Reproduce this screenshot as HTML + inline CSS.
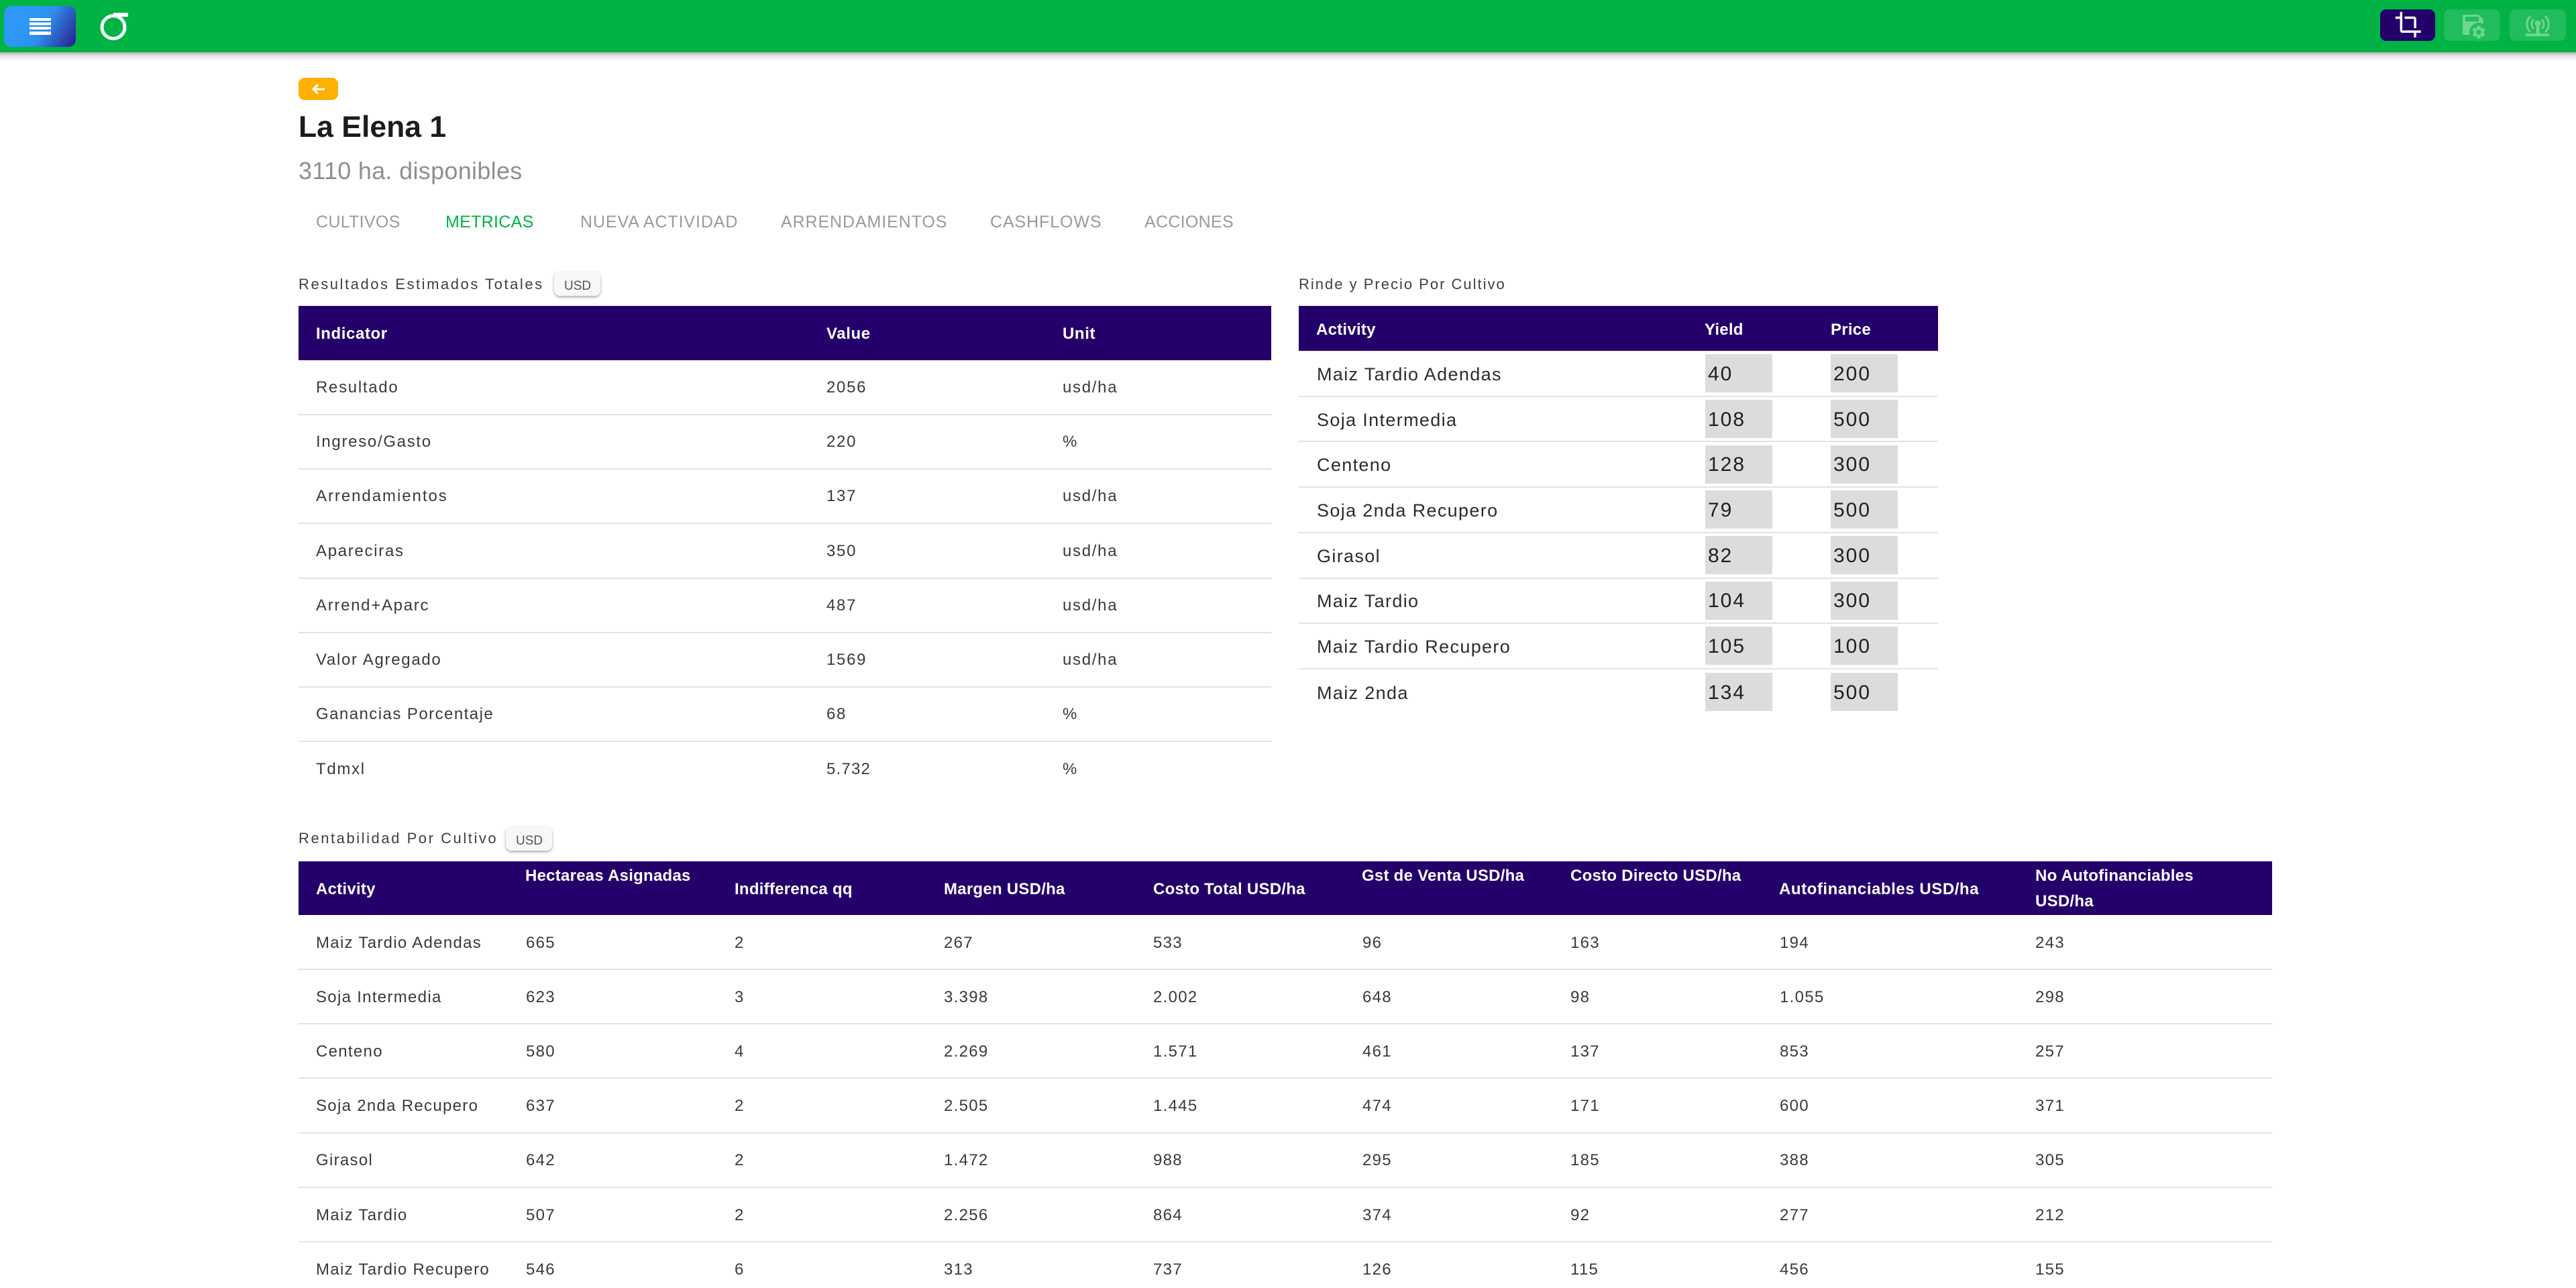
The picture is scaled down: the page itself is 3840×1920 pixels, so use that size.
<!DOCTYPE html>
<html lang="es"><head><meta charset="utf-8"><title>La Elena 1</title>
<style>
html,body{margin:0;padding:0;background:#fff;width:3840px;height:1920px;overflow:hidden}
svg{display:block;position:absolute;left:0;top:0}
text{font-family:"Liberation Sans",sans-serif;white-space:pre}
.h{font-weight:700;font-size:24px;fill:#fff;letter-spacing:.25px}
.b{font-size:24px;fill:#3a3a3a;letter-spacing:1.3px}
.b1{font-size:24px;fill:#3a3a3a;letter-spacing:1.7px}
.n{font-size:27px;fill:#2c2c2c;letter-spacing:1.35px}
.i{font-size:30px;fill:#1f1f1f;letter-spacing:2px}
.t{font-size:22px;fill:#3f3f3f;letter-spacing:2.55px}
.u{font-size:19px;fill:#555}
.tab{font-size:25px;fill:#9a9a9a;letter-spacing:.3px}
.l{fill:#e3e3e3}
</style></head><body>
<svg width="3840" height="1920" viewBox="0 0 3840 1920" xmlns="http://www.w3.org/2000/svg">
<defs>
<linearGradient id="gb" gradientUnits="userSpaceOnUse" x1="40" y1="30" x2="118" y2="76"><stop offset="0" stop-color="#2e98f6"/><stop offset=".3" stop-color="#2e8fec"/><stop offset="1" stop-color="#2a0a80"/></linearGradient>
<linearGradient id="sh" x1="0" y1="0" x2="0" y2="1"><stop offset="0" stop-color="#000" stop-opacity=".28"/><stop offset=".4" stop-color="#000" stop-opacity=".1"/><stop offset="1" stop-color="#000" stop-opacity="0"/></linearGradient>
<filter id="cs" x="-20%" y="-20%" width="140%" height="150%"><feDropShadow dx="0" dy="2" stdDeviation="2" flood-color="#000" flood-opacity=".35"/></filter>
</defs>

<!-- top bar -->
<rect x="0" y="78" width="3840" height="14" fill="url(#sh)"/>
<rect x="0" y="0" width="3840" height="78" fill="#00b344"/>
<rect x="6" y="9" width="107" height="61" rx="11" fill="url(#gb)"/>
<g fill="#fff"><rect x="44" y="27" width="32" height="4"/><rect x="44" y="33.5" width="32" height="4"/><rect x="44" y="40" width="32" height="4"/><rect x="44" y="47" width="32" height="5"/></g>
<circle cx="169" cy="40.5" r="17" fill="none" stroke="#fff" stroke-width="5"/>
<rect x="169" y="19" width="22" height="6" fill="#fff"/>

<rect x="3548" y="14" width="82" height="47" rx="9" fill="#24006b"/>
<path transform="translate(3569 16) scale(1.73)" fill="#fff" d="M17 15h2V7c0-1.1-.9-2-2-2H9v2h8v8zM7 17V1H5v4H1v2h4v10c0 1.1.9 2 2 2h10v4h2v-4h4v-2H7z"/>
<rect x="3643" y="14" width="84" height="47" rx="9" fill="#fff" fill-opacity=".13"/>
<rect x="3741" y="14" width="84" height="47" rx="9" fill="#fff" fill-opacity=".13"/>
<g>
<path d="M3673 22h22l7 7v23h-29a2 2 0 0 1-2-2V24a2 2 0 0 1 2-2z" fill="#6fd68f"/>
<rect x="3675" y="25" width="20" height="7" fill="#22bd5c"/>
<circle cx="3695" cy="48" r="14" fill="#22bd5c"/>
<path transform="translate(3683 36)" fill="#6fd68f" d="M19.14 12.94c.04-.3.06-.61.06-.94 0-.32-.02-.64-.07-.94l2.03-1.58c.18-.14.23-.41.12-.61l-1.92-3.32c-.12-.22-.37-.29-.59-.22l-2.39.96c-.5-.38-1.03-.7-1.62-.94l-.36-2.54c-.04-.24-.24-.41-.48-.41h-3.84c-.24 0-.43.17-.47.41l-.36 2.54c-.59.24-1.13.57-1.62.94l-2.39-.96c-.22-.08-.47 0-.59.22L2.74 8.87c-.12.21-.08.47.12.61l2.03 1.58c-.05.3-.09.63-.09.94s.02.64.07.94l-2.03 1.58c-.18.14-.23.41-.12.61l1.92 3.32c.12.22.37.29.59.22l2.39-.96c.5.38 1.03.7 1.62.94l.36 2.54c.05.24.24.41.48.41h3.84c.24 0 .44-.17.47-.41l.36-2.54c.59-.24 1.13-.56 1.62-.94l2.39.96c.22.08.47 0 .59-.22l1.92-3.32c.12-.22.07-.47-.12-.61l-2.01-1.58zM12 15.6c-1.98 0-3.6-1.62-3.6-3.6s1.62-3.6 3.6-3.6 3.6 1.62 3.6 3.6-1.62 3.6-3.6 3.6z"/>
</g>
<g fill="none" stroke="#6fd68f" stroke-width="3">
<path d="M3772 24c-7 7-7 17 0 24M3794 24c7 7 7 17 0 24M3777 29c-4 4-4 10 0 14M3789 29c4 4 4 10 0 14"/>
<path d="M3765 52h35" stroke-width="4"/><path d="M3783 38v14" stroke-width="5"/>
</g>
<circle cx="3783" cy="35" r="4.5" fill="#6fd68f"/>

<!-- header -->
<rect x="445" y="116" width="59" height="33" rx="9" fill="#ffb000"/>
<path d="M484 133h-17M474 126l-7 7 7 7" fill="none" stroke="#fff" stroke-width="3"/>
<text x="445" y="204" font-size="44.5" font-weight="700" fill="#1c1c1c">La Elena 1</text>
<text x="445" y="267" font-size="36" fill="#8f8f8f" style="letter-spacing:.3px">3110 ha. disponibles</text>
<text y="339" class="tab"><tspan x="471">CULTIVOS</tspan><tspan x="664" style="fill:#00b344">METRICAS</tspan></text>
<text y="339" class="tab" style="letter-spacing:.9px"><tspan x="865">NUEVA ACTIVIDAD</tspan><tspan x="1164">ARRENDAMIENTOS</tspan><tspan x="1476">CASHFLOWS</tspan></text>
<text y="339" class="tab"><tspan x="1706">ACCIONES</tspan></text>

<!-- table 1 -->
<text x="445" y="431" class="t">Resultados Estimados Totales</text>
<rect x="826" y="405" width="69" height="36" rx="9" fill="#f8f8f8" filter="url(#cs)"/>
<text x="841" y="432" class="u">USD</text>
<rect x="445" y="456" width="1450" height="81" fill="#24006b"/>
<text y="505" class="h" style="letter-spacing:.6px"><tspan x="471">Indicator</tspan><tspan x="1232">Value</tspan><tspan x="1584">Unit</tspan></text>
<g class="l"><rect x="445" y="617" width="1450" height="2"/><rect x="445" y="698" width="1450" height="2"/><rect x="445" y="779" width="1450" height="2"/><rect x="445" y="861" width="1450" height="2"/><rect x="445" y="942" width="1450" height="2"/><rect x="445" y="1023" width="1450" height="2"/><rect x="445" y="1104" width="1450" height="2"/></g>
<text y="585" class="b1"><tspan x="471">Resultado</tspan><tspan x="1232">2056</tspan><tspan x="1584">usd/ha</tspan></text>
<text y="666" class="b1"><tspan x="471">Ingreso/Gasto</tspan><tspan x="1232">220</tspan><tspan x="1584">%</tspan></text>
<text y="747" class="b1"><tspan x="471" style="letter-spacing:1.95px">Arrendamientos</tspan><tspan x="1232">137</tspan><tspan x="1584">usd/ha</tspan></text>
<text y="829" class="b1"><tspan x="471">Apareciras</tspan><tspan x="1232">350</tspan><tspan x="1584">usd/ha</tspan></text>
<text y="910" class="b1"><tspan x="471">Arrend+Aparc</tspan><tspan x="1232">487</tspan><tspan x="1584">usd/ha</tspan></text>
<text y="991" class="b1"><tspan x="471">Valor Agregado</tspan><tspan x="1232">1569</tspan><tspan x="1584">usd/ha</tspan></text>
<text y="1072" class="b1"><tspan x="471" style="letter-spacing:1.45px">Ganancias Porcentaje</tspan><tspan x="1232">68</tspan><tspan x="1584">%</tspan></text>
<text y="1154" class="b1"><tspan x="471">Tdmxl</tspan><tspan x="1232" style="letter-spacing:1.2px">5.732</tspan><tspan x="1584">%</tspan></text>

<!-- table 2 -->
<text x="1936" y="431" class="t" style="letter-spacing:2px">Rinde y Precio Por Cultivo</text>
<rect x="1936" y="456" width="953" height="67" fill="#24006b"/>
<text y="499" class="h"><tspan x="1962">Activity</tspan><tspan x="2541">Yield</tspan><tspan x="2729">Price</tspan></text>
<g class="l"><rect x="1936" y="590" width="953" height="2"/><rect x="1936" y="657" width="953" height="2"/><rect x="1936" y="725" width="953" height="2"/><rect x="1936" y="793" width="953" height="2"/><rect x="1936" y="861" width="953" height="2"/><rect x="1936" y="928" width="953" height="2"/><rect x="1936" y="996" width="953" height="2"/></g>
<g fill="#dcdcdc">
<rect x="2542" y="528" width="100" height="57"/><rect x="2729" y="528" width="100" height="57"/>
<rect x="2542" y="596" width="100" height="57"/><rect x="2729" y="596" width="100" height="57"/>
<rect x="2542" y="664" width="100" height="57"/><rect x="2729" y="664" width="100" height="57"/>
<rect x="2542" y="731" width="100" height="57"/><rect x="2729" y="731" width="100" height="57"/>
<rect x="2542" y="799" width="100" height="57"/><rect x="2729" y="799" width="100" height="57"/>
<rect x="2542" y="867" width="100" height="57"/><rect x="2729" y="867" width="100" height="57"/>
<rect x="2542" y="934" width="100" height="57"/><rect x="2729" y="934" width="100" height="57"/>
<rect x="2542" y="1003" width="100" height="57"/><rect x="2729" y="1003" width="100" height="57"/>
</g>
<text x="1963" y="567" class="n">Maiz Tardio Adendas</text><text y="567" class="i"><tspan x="2546">40</tspan><tspan x="2733">200</tspan></text>
<text x="1963" y="635" class="n">Soja Intermedia</text><text y="635" class="i"><tspan x="2546">108</tspan><tspan x="2733">500</tspan></text>
<text x="1963" y="702" class="n">Centeno</text><text y="702" class="i"><tspan x="2546">128</tspan><tspan x="2733">300</tspan></text>
<text x="1963" y="770" class="n">Soja 2nda Recupero</text><text y="770" class="i"><tspan x="2546">79</tspan><tspan x="2733">500</tspan></text>
<text x="1963" y="838" class="n">Girasol</text><text y="838" class="i"><tspan x="2546">82</tspan><tspan x="2733">300</tspan></text>
<text x="1963" y="905" class="n">Maiz Tardio</text><text y="905" class="i"><tspan x="2546">104</tspan><tspan x="2733">300</tspan></text>
<text x="1963" y="973" class="n">Maiz Tardio Recupero</text><text y="973" class="i"><tspan x="2546">105</tspan><tspan x="2733">100</tspan></text>
<text x="1963" y="1042" class="n">Maiz 2nda</text><text y="1042" class="i"><tspan x="2546">134</tspan><tspan x="2733">500</tspan></text>

<!-- table 3 -->
<text x="445" y="1257" class="t">Rentabilidad Por Cultivo</text>
<rect x="754" y="1232" width="69" height="36" rx="9" fill="#f8f8f8" filter="url(#cs)"/>
<text x="769" y="1259" class="u">USD</text>
<rect x="445" y="1284" width="2942" height="80" fill="#24006b"/>
<text y="1333" class="h"><tspan x="471">Activity</tspan><tspan x="1095">Indifferenca qq</tspan><tspan x="1407">Margen USD/ha</tspan><tspan x="1719">Costo Total USD/ha</tspan></text>
<text y="1333" x="2652" class="h" style="letter-spacing:.55px">Autofinanciables USD/ha</text>
<text y="1313" class="h"><tspan x="783">Hectareas Asignadas</tspan><tspan x="2030">Gst de Venta USD/ha</tspan><tspan x="2341">Costo Directo USD/ha</tspan><tspan x="3034">No Autofinanciables</tspan></text>
<text y="1351" x="3034" class="h">USD/ha</text>
<g class="l"><rect x="445" y="1444" width="2942" height="2"/><rect x="445" y="1525" width="2942" height="2"/><rect x="445" y="1606" width="2942" height="2"/><rect x="445" y="1688" width="2942" height="2"/><rect x="445" y="1769" width="2942" height="2"/><rect x="445" y="1850" width="2942" height="2"/></g>
<text y="1413" class="b"><tspan x="471">Maiz Tardio Adendas</tspan><tspan x="784">665</tspan><tspan x="1095">2</tspan><tspan x="1407">267</tspan><tspan x="1719">533</tspan><tspan x="2031">96</tspan><tspan x="2341">163</tspan><tspan x="2653">194</tspan><tspan x="3034">243</tspan></text>
<text y="1494" class="b"><tspan x="471">Soja Intermedia</tspan><tspan x="784">623</tspan><tspan x="1095">3</tspan><tspan x="1407">3.398</tspan><tspan x="1719">2.002</tspan><tspan x="2031">648</tspan><tspan x="2341">98</tspan><tspan x="2653">1.055</tspan><tspan x="3034">298</tspan></text>
<text y="1575" class="b"><tspan x="471">Centeno</tspan><tspan x="784">580</tspan><tspan x="1095">4</tspan><tspan x="1407">2.269</tspan><tspan x="1719">1.571</tspan><tspan x="2031">461</tspan><tspan x="2341">137</tspan><tspan x="2653">853</tspan><tspan x="3034">257</tspan></text>
<text y="1656" class="b"><tspan x="471">Soja 2nda Recupero</tspan><tspan x="784">637</tspan><tspan x="1095">2</tspan><tspan x="1407">2.505</tspan><tspan x="1719">1.445</tspan><tspan x="2031">474</tspan><tspan x="2341">171</tspan><tspan x="2653">600</tspan><tspan x="3034">371</tspan></text>
<text y="1737" class="b"><tspan x="471">Girasol</tspan><tspan x="784">642</tspan><tspan x="1095">2</tspan><tspan x="1407">1.472</tspan><tspan x="1719">988</tspan><tspan x="2031">295</tspan><tspan x="2341">185</tspan><tspan x="2653">388</tspan><tspan x="3034">305</tspan></text>
<text y="1819" class="b"><tspan x="471">Maiz Tardio</tspan><tspan x="784">507</tspan><tspan x="1095">2</tspan><tspan x="1407">2.256</tspan><tspan x="1719">864</tspan><tspan x="2031">374</tspan><tspan x="2341">92</tspan><tspan x="2653">277</tspan><tspan x="3034">212</tspan></text>
<text y="1900" class="b"><tspan x="471">Maiz Tardio Recupero</tspan><tspan x="784">546</tspan><tspan x="1095">6</tspan><tspan x="1407">313</tspan><tspan x="1719">737</tspan><tspan x="2031">126</tspan><tspan x="2341">115</tspan><tspan x="2653">456</tspan><tspan x="3034">155</tspan></text>
</svg>
</body></html>
